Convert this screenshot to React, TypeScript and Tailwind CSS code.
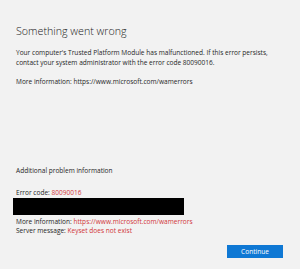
export default function App() {
  return (
    <div
      className="flex h-[269px] w-[300px] flex-col bg-[#f2f2f2] pl-4 pr-[17px] text-[#262626]"
      style={{ fontFamily: '"Open Sans", "Noto Sans", sans-serif' }}
    >
      <h1 className="mt-[25px] text-[10.7px] font-light leading-[13px] text-[#1a1a1a]">
        Something went wrong
      </h1>

      <p className="mt-[10px] text-[6.55px] leading-[9.5px]">
        Your computer's Trusted Platform Module has malfunctioned. If this error persists,
        <br />
        contact your system administrator with the error code 80090016.
      </p>

      <p className="mt-[9.5px] text-[6.55px] leading-[9.5px]">
        More information: https://www.microsoft.com/wamerrors
      </p>

      <p className="mt-[80px] text-[6.55px] leading-[9.5px]">Additional problem information</p>

      <div className="mt-[12.5px] text-[6.55px] leading-[9.5px]">
        <p>
          Error code: <span className="text-[#d13438]">80090016</span>
        </p>
        <div className="-ml-[3px] mt-[0.5px] h-[17px] w-[171px] bg-black" />
        <p className="mt-[1.5px]">
          More information:{" "}
          <span className="text-[#d13438]">https://www.microsoft.com/wamerrors</span>
        </p>
        <p className="leading-[10px]">
          Server message: <span className="text-[#d13438]">Keyset does not exist</span>
        </p>
      </div>

      <div className="mt-[9px] flex justify-end">
        <button className="h-[13px] w-[56px] bg-[#0f78d4] text-[6.55px] leading-[13px] text-white">
          Continue
        </button>
      </div>
    </div>
  );
}
